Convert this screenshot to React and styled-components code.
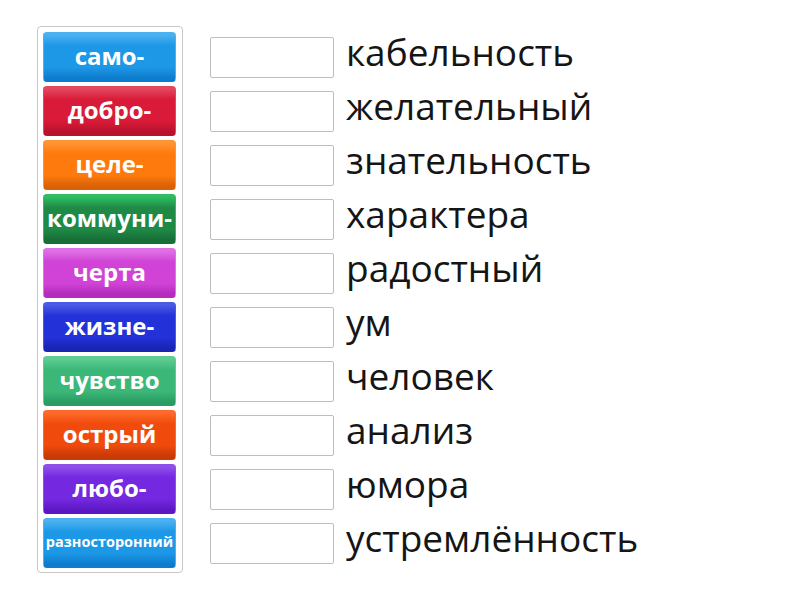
import React from "react";
import styled, { createGlobalStyle } from "styled-components";

const Global = createGlobalStyle`
  html, body { margin: 0; padding: 0; background: #fff; }
  body { font-family: "Open Sans", "Noto Sans", sans-serif; }
`;

const Page = styled.div`
  display: flex;
  align-items: flex-start;
  padding: 26px 0 0 37px;
  width: 800px;
  height: 600px;
  box-sizing: border-box;
`;

const Bank = styled.div`
  display: flex;
  flex-direction: column;
  gap: 4px;
  padding: 5px 6px 4px 5px;
  border: 1px solid #c8c8c8;
  border-radius: 4px;
  background: #fff;
`;

const Tile = styled.div`
  width: 133px;
  height: 50px;
  box-sizing: border-box;
  display: flex;
  align-items: center;
  justify-content: center;
  border-radius: 4px;
  color: #fff;
  font-weight: 700;
  font-size: ${(p) => p.$size || 24}px;
  white-space: nowrap;
  background: linear-gradient(${(p) => p.$light}, ${(p) => p.$c} 25%, ${(p) => p.$c} 75%, ${(p) => p.$dark});
  border-top: 3px solid ${(p) => p.$light};
  border-left: 1px solid ${(p) => p.$light};
  border-right: 1px solid ${(p) => p.$light};
  border-bottom: 4px solid ${(p) => p.$dark};
  padding-bottom: 3px;
`;

const Rows = styled.div`
  display: flex;
  flex-direction: column;
  gap: 4px;
  margin-left: 27px;
  padding-top: 6px;
`;

const Row = styled.div`
  display: flex;
  align-items: center;
  height: 50px;
  gap: 12px;
`;

const Slot = styled.div`
  width: 124px;
  height: 41px;
  box-sizing: border-box;
  border: 1px solid #bdbdbd;
  border-radius: 2px;
  background: #fff;
  flex-shrink: 0;
`;

const Word = styled.div`
  font-size: 37px;
  color: #151515;
  line-height: 1;
  margin-top: -12px;
  white-space: nowrap;
`;

const tiles = [
  { t: "само-", c: "#1d98e6", light: "#4bb1f0", dark: "#0d7ccc" },
  { t: "добро-", c: "#d91a38", light: "#e4475d", dark: "#b8122d" },
  { t: "целе-", c: "#ff7a0c", light: "#ff9433", dark: "#d96206" },
  { t: "коммуни-", c: "#1f8a46", light: "#2fbd62", dark: "#176e37" },
  { t: "черта", c: "#d043d6", light: "#e070e4", dark: "#b52cbd" },
  { t: "жизне-", c: "#2332d8", light: "#4b5be6", dark: "#1a25b4" },
  { t: "чувство", c: "#3bb878", light: "#5fcc93", dark: "#2b9c62" },
  { t: "острый", c: "#f04b0c", light: "#ff6a2a", dark: "#c93a06" },
  { t: "любо-", c: "#7428e0", light: "#8f4fea", dark: "#5b18c2" },
  { t: "разносторонний", c: "#1d98e6", light: "#4bb1f0", dark: "#0d7ccc", size: 14.5 },
];

const words = [
  "кабельность",
  "желательный",
  "знательность",
  "характера",
  "радостный",
  "ум",
  "человек",
  "анализ",
  "юмора",
  "устремлённость",
];

export default function App() {
  return (
    <>
      <Global />
      <Page>
        <Bank>
          {tiles.map((x) => (
            <Tile key={x.t} $c={x.c} $light={x.light} $dark={x.dark} $size={x.size}>
              {x.t}
            </Tile>
          ))}
        </Bank>
        <Rows>
          {words.map((w) => (
            <Row key={w}>
              <Slot />
              <Word>{w}</Word>
            </Row>
          ))}
        </Rows>
      </Page>
    </>
  );
}
